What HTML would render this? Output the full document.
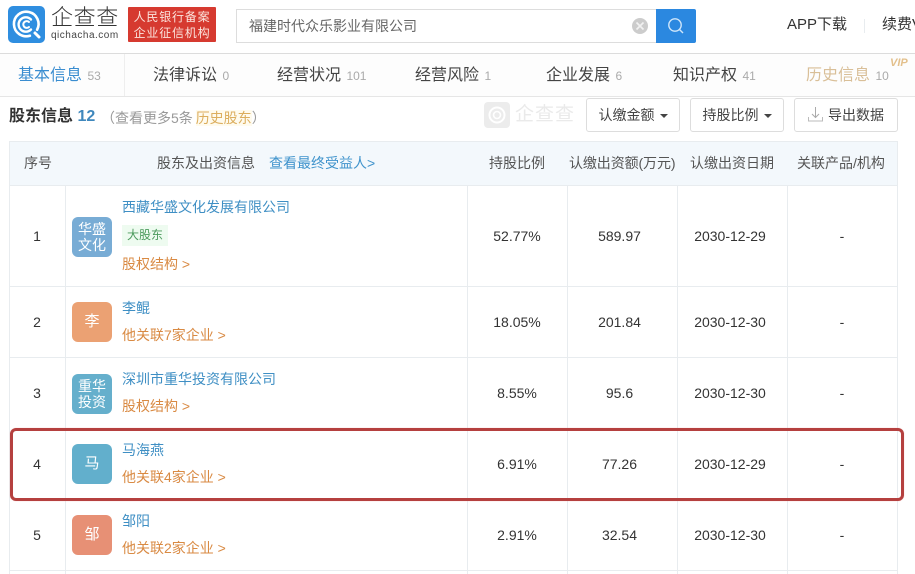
<!DOCTYPE html>
<html><head><meta charset="utf-8">
<style>
*{margin:0;padding:0;box-sizing:border-box}
html,body{width:915px;height:574px;overflow:hidden;background:#fff}
body{position:relative;font-family:"Liberation Sans","Noto Sans CJK SC",sans-serif;color:#333;filter:blur(.3px)}
.a{position:absolute;white-space:nowrap}
.ln{position:absolute;background:#e8ecef}
.tab{position:absolute;top:66px;font-size:16px;line-height:20px;color:#444;white-space:nowrap}
.tab small{font-size:12px;color:#aaa;margin-left:1px}
.btn{position:absolute;top:98px;height:34px;border:1px solid #ddd;border-radius:3px;background:#fff;font-size:14px;line-height:32px;text-align:center;color:#444}
.car{display:inline-block;width:0;height:0;border:4px solid transparent;border-top:4px solid #444;border-bottom:0;margin-left:5px;vertical-align:2px}
.th{position:absolute;top:154px;font-size:14px;line-height:18px;color:#555;white-space:nowrap;text-align:center}
.c{position:absolute;font-size:14px;line-height:18px;color:#333;text-align:center;white-space:nowrap}
.av{position:absolute;left:72px;width:40px;height:40px;border-radius:6px;color:#fff;font-size:15px;text-align:center;line-height:40px;opacity:.92}
.av.t{line-height:16px;padding-top:4px;font-size:14px}
.nm{position:absolute;left:122px;font-size:14px;line-height:18px;color:#3f8fc4;white-space:nowrap}
.lk{position:absolute;left:122px;font-size:14px;line-height:18px;color:#d98a43;white-space:nowrap}
</style></head><body>

<!-- logo -->
<svg class="a" style="left:8px;top:6px" width="38" height="38" viewBox="0 0 38 38">
<rect width="37" height="37" rx="5" fill="#2f8ee0"/>
<path d="M26.5 27A12.3 12.3 0 1 1 30.5 18.5" fill="none" stroke="#fff" stroke-width="2.6" stroke-linecap="round" transform="rotate(25 18 18)"/>
<path d="M23 13.5A7.2 7.2 0 1 0 23 23.5" fill="none" stroke="#fff" stroke-width="2.4" stroke-linecap="round"/>
<path d="M21 16A3.4 3.4 0 1 0 21 21" fill="none" stroke="#fff" stroke-width="2" stroke-linecap="round"/>
<path d="M27 27L31 31" stroke="#fff" stroke-width="3" stroke-linecap="round"/>
</svg>
<div class="a" style="left:51px;top:4px;font-size:22px;line-height:28px;color:#333;letter-spacing:.6px;font-weight:300">企查查</div>
<div class="a" style="left:51px;top:29px;font-size:10px;line-height:13px;color:#444;letter-spacing:.5px">qichacha.com</div>
<div class="a" style="left:128px;top:7px;width:88px;height:35px;background:#d63a30;border-radius:1px;color:#fbe3dc;font-size:12px;line-height:16px;text-align:center;padding-top:2px;letter-spacing:.8px">人民银行备案<br>企业征信机构</div>

<!-- search -->
<div class="a" style="left:236px;top:9px;width:421px;height:34px;border:1px solid #ddd;background:#fff"></div>
<div class="a" style="left:249px;top:17px;font-size:14px;line-height:18px;color:#666">福建时代众乐影业有限公司</div>
<svg class="a" style="left:631px;top:17px" width="18" height="18" viewBox="0 0 18 18"><circle cx="9" cy="9" r="8" fill="#ccc"/><path d="M5.5 5.5L12.5 12.5M12.5 5.5L5.5 12.5" stroke="#f2f2f2" stroke-width="1.6"/></svg>
<div class="a" style="left:656px;top:9px;width:40px;height:34px;background:#2b88e0;border-radius:0 2px 2px 0"></div>
<svg class="a" style="left:666px;top:16px" width="20" height="20" viewBox="0 0 20 20"><circle cx="9" cy="9" r="6.2" fill="none" stroke="#cfe6fa" stroke-width="1.4"/><path d="M13.5 13.5L17 17" stroke="#cfe6fa" stroke-width="1.4"/></svg>
<div class="a" style="left:787px;top:15px;font-size:15px;line-height:20px;color:#333">APP下载</div>
<div class="ln" style="left:864px;top:19px;width:1px;height:14px"></div>
<div class="a" style="left:882px;top:15px;font-size:15px;line-height:20px;color:#333">续费VIP</div>

<!-- tabs -->
<div class="ln" style="left:0;top:53px;width:915px;height:1px;background:#dcdcdc"></div>
<div class="a" style="left:0;top:54px;width:915px;height:42px;background:#fdfdfd"></div>
<div class="ln" style="left:0;top:96px;width:915px;height:1px;background:#e6e6e6"></div>
<div class="ln" style="left:124px;top:54px;width:1px;height:42px;background:#eee"></div>
<div class="tab" style="left:18px;color:#3a8dd0">基本信息 <small>53</small></div>
<div class="tab" style="left:153px">法律诉讼 <small>0</small></div>
<div class="tab" style="left:277px">经营状况 <small>101</small></div>
<div class="tab" style="left:415px">经营风险 <small>1</small></div>
<div class="tab" style="left:546px">企业发展 <small>6</small></div>
<div class="tab" style="left:673px">知识产权 <small>41</small></div>
<div class="tab" style="left:806px;color:#d9bf98">历史信息 <small>10</small></div>
<div class="a" style="left:890px;top:57px;font-size:11px;line-height:12px;font-weight:bold;font-style:italic;color:#e3c08c">VIP</div>

<!-- section title -->
<div class="a" style="left:9px;top:107px;font-size:16px;line-height:20px;font-weight:bold;color:#333">股东信息 <span style="color:#3f88bd">12</span></div>
<div class="a" style="left:101px;top:109px;font-size:14px;line-height:18px;color:#999">（查看更多5条 <span style="color:#dcae5e;background:#fffbee;margin-left:-1px">历史股东</span>）</div>
<svg class="a" style="left:484px;top:102px" width="26" height="26" viewBox="0 0 26 26"><rect width="26" height="26" rx="4" fill="#ececec"/><circle cx="13" cy="13" r="7.5" fill="none" stroke="#fff" stroke-width="2"/><circle cx="13" cy="13" r="3.5" fill="none" stroke="#fff" stroke-width="1.6"/></svg>
<div class="a" style="left:515px;top:103px;font-size:19px;line-height:24px;color:#eaeaea;letter-spacing:1px">企查查</div>
<div class="btn" style="left:586px;width:94px">认缴金额<span class="car"></span></div>
<div class="btn" style="left:690px;width:94px">持股比例<span class="car"></span></div>
<div class="btn" style="left:794px;width:104px;padding-left:20px">导出数据</div>
<svg class="a" style="left:807px;top:106px" width="17" height="17" viewBox="0 0 17 17"><path d="M8.5 1V11M5 8L8.5 11.5L12 8" fill="none" stroke="#aaa" stroke-width="1"/><path d="M1.5 11V15H15.5V11" fill="none" stroke="#bbb" stroke-width="1"/></svg>

<!-- table -->
<div class="a" style="left:9px;top:141px;width:888px;height:44px;background:#f3f8fc"></div>
<div class="ln" style="left:9px;top:141px;width:888px;height:1px"></div>
<div class="ln" style="left:9px;top:185px;width:888px;height:1px"></div>
<div class="ln" style="left:9px;top:286px;width:888px;height:1px"></div>
<div class="ln" style="left:9px;top:357px;width:888px;height:1px"></div>
<div class="ln" style="left:9px;top:570px;width:888px;height:1px"></div>
<div class="ln" style="left:9px;top:141px;width:1px;height:433px"></div>
<div class="ln" style="left:65px;top:185px;width:1px;height:389px"></div>
<div class="ln" style="left:467px;top:185px;width:1px;height:389px"></div>
<div class="ln" style="left:567px;top:185px;width:1px;height:389px"></div>
<div class="ln" style="left:677px;top:185px;width:1px;height:389px"></div>
<div class="ln" style="left:787px;top:185px;width:1px;height:389px"></div>
<div class="ln" style="left:897px;top:141px;width:1px;height:433px"></div>

<div class="th" style="left:24px">序号</div>
<div class="th" style="left:157px">股东及出资信息</div>
<div class="th" style="left:269px;color:#3f93cc">查看最终受益人&gt;</div>
<div class="th" style="left:489px">持股比例</div>
<div class="th" style="left:569px;letter-spacing:-.1px">认缴出资额(万元)</div>
<div class="th" style="left:690px">认缴出资日期</div>
<div class="th" style="left:797px">关联产品/机构</div>

<!-- row 1 -->
<div class="c" style="left:9px;width:56px;top:227px">1</div>
<div class="av t" style="top:217px;background:#6da6d2">华盛<br>文化</div>
<div class="nm" style="top:198px">西藏华盛文化发展有限公司</div>
<div class="a" style="left:122px;top:225px;width:46px;height:21px;background:#eefbf0;font-size:12px;line-height:21px;text-align:center;color:#4c9a5d">大股东</div>
<div class="lk" style="top:255px">股权结构 &gt;</div>
<div class="c" style="left:467px;width:100px;top:227px">52.77%</div>
<div class="c" style="left:567px;width:105px;top:227px">589.97</div>
<div class="c" style="left:677px;width:106px;top:227px">2030-12-29</div>
<div class="c" style="left:787px;width:110px;top:227px">-</div>

<!-- row 2 -->
<div class="c" style="left:9px;width:56px;top:313px">2</div>
<div class="av" style="top:302px;background:#ea9a68">李</div>
<div class="nm" style="top:299px">李鲲</div>
<div class="lk" style="top:326px">他关联7家企业 &gt;</div>
<div class="c" style="left:467px;width:100px;top:313px">18.05%</div>
<div class="c" style="left:567px;width:105px;top:313px">201.84</div>
<div class="c" style="left:677px;width:106px;top:313px">2030-12-30</div>
<div class="c" style="left:787px;width:110px;top:313px">-</div>

<!-- row 3 -->
<div class="c" style="left:9px;width:56px;top:384px">3</div>
<div class="av t" style="top:374px;background:#58a9c8">重华<br>投资</div>
<div class="nm" style="top:370px">深圳市重华投资有限公司</div>
<div class="lk" style="top:397px">股权结构 &gt;</div>
<div class="c" style="left:467px;width:100px;top:384px">8.55%</div>
<div class="c" style="left:567px;width:105px;top:384px">95.6</div>
<div class="c" style="left:677px;width:106px;top:384px">2030-12-30</div>
<div class="c" style="left:787px;width:110px;top:384px">-</div>

<!-- row 4 -->
<div class="c" style="left:9px;width:56px;top:455px">4</div>
<div class="av" style="top:444px;background:#55a9c8">马</div>
<div class="nm" style="top:441px">马海燕</div>
<div class="lk" style="top:468px">他关联4家企业 &gt;</div>
<div class="c" style="left:467px;width:100px;top:455px">6.91%</div>
<div class="c" style="left:567px;width:105px;top:455px">77.26</div>
<div class="c" style="left:677px;width:106px;top:455px">2030-12-29</div>
<div class="c" style="left:787px;width:110px;top:455px">-</div>

<!-- row 5 -->
<div class="c" style="left:9px;width:56px;top:526px">5</div>
<div class="av" style="top:515px;background:#e5876a">邹</div>
<div class="nm" style="top:512px">邹阳</div>
<div class="lk" style="top:539px">他关联2家企业 &gt;</div>
<div class="c" style="left:467px;width:100px;top:526px">2.91%</div>
<div class="c" style="left:567px;width:105px;top:526px">32.54</div>
<div class="c" style="left:677px;width:106px;top:526px">2030-12-30</div>
<div class="c" style="left:787px;width:110px;top:526px">-</div>

<!-- red highlight -->
<div class="a" style="left:10px;top:428px;width:894px;height:73px;border:3px solid #b5403f;border-radius:6px;box-shadow:0 0 1px #f3b9b5"></div>
</body></html>
